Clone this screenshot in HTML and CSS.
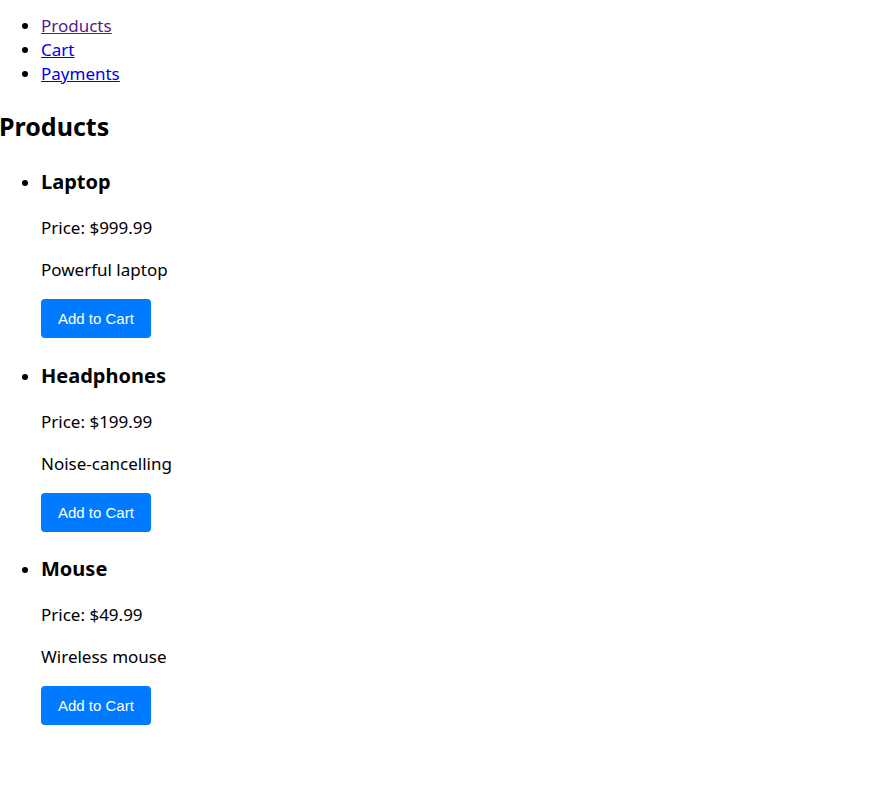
FILE: index.html
```html
<!DOCTYPE html>
<html lang="en">
<head>
<meta charset="utf-8">
<title>Shop</title>
<link rel="stylesheet" href="styles.css">
</head>
<body>
<nav>
  <ul class="nav-list">
    <li><a class="visited" href="#products">Products</a></li>
    <li><a href="#cart">Cart</a></li>
    <li><a href="#payments">Payments</a></li>
  </ul>
</nav>
<main>
  <h1 class="page-title">Products</h1>
  <ul class="product-list">
    <li class="product">
      <h3 class="product-name">Laptop</h3>
      <p class="product-text">Price: $999.99</p>
      <p class="product-text product-desc">Powerful laptop</p>
      <button class="add-btn">Add to Cart</button>
    </li>
    <li class="product">
      <h3 class="product-name">Headphones</h3>
      <p class="product-text">Price: $199.99</p>
      <p class="product-text product-desc">Noise-cancelling</p>
      <button class="add-btn">Add to Cart</button>
    </li>
    <li class="product">
      <h3 class="product-name">Mouse</h3>
      <p class="product-text">Price: $49.99</p>
      <p class="product-text product-desc">Wireless mouse</p>
      <button class="add-btn">Add to Cart</button>
    </li>
  </ul>
</main>
</body>
</html>
```
FILE: styles.css
```css
html, body {
  margin: 0;
  padding: 0;
  background: #ffffff;
}

body {
  font-family: "Noto Sans", "Open Sans", sans-serif;
  font-size: 17px;
  line-height: 24px;
  color: #000000;
}

.nav-list {
  margin: 14px 0 18px;
  padding-left: 41px;
}

.nav-list a {
  color: #0000ee;
  text-decoration: underline;
}

.nav-list a.visited {
  color: #551a8b;
}

.page-title {
  font-size: 25px;
  line-height: 36px;
  font-weight: 700;
  margin: 22px 0 24px -1px;
}

.product-list {
  margin: 0;
  padding-left: 41px;
}

.product-name {
  font-size: 20px;
  line-height: 28px;
  font-weight: 700;
  margin: 23.5px 0 20px;
}

.product:first-child .product-name {
  margin-top: 0;
}

.product-text {
  margin: 0 0 18px;
}

.product-desc {
  margin-bottom: 0;
}

.add-btn {
  display: block;
  margin-top: 17px;
  height: 39px;
  padding: 0 17px;
  border: none;
  border-radius: 4px;
  background: #007bff;
  color: #ffffff;
  font-family: "Liberation Sans", Arial, sans-serif;
  font-size: 15px;
  line-height: 39px;
}
```
